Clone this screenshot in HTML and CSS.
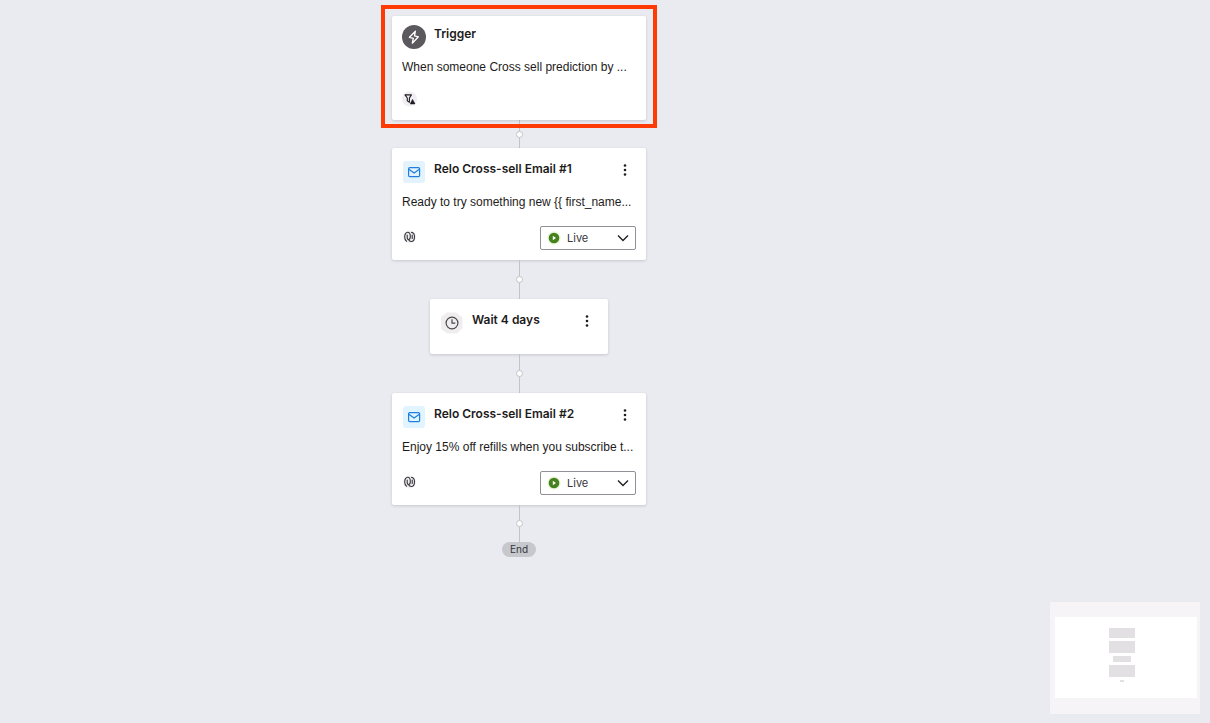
FILE: index.html
```
<!DOCTYPE html>
<html lang="en">
<head>
    <meta charset="UTF-8">
    <meta name="viewport" content="width=device-width, initial-scale=1">
    <title>Flow</title>
    <link rel="stylesheet" href="styles.css">
</head>
<body>
<main class="flow">
    <div class="highlight">
        <section class="card card_trigger">
            <div class="card_head">
                <svg class="icon" viewBox="0 0 24 24" fill="none">
                    <circle cx="12" cy="12" r="12" fill="#5b595e"/>
                    <path d="M13.4 6.2 7.4 12.3l3.9 1-1 4.9 6.1-6.4-3.9-.9z" stroke="#fff" stroke-width="1.3" stroke-linejoin="round"/>
                </svg>
                <h3 class="title">Trigger</h3>
            </div>
            <p class="desc">When someone Cross sell prediction by ...</p>
            <div class="card_foot">
                <svg class="badge" viewBox="0 0 16 16" fill="none">
                    <circle cx="7.5" cy="8" r="7.5" fill="#f0eef2"/>
                    <path d="M3 3.9h6.4L7.4 7v4.3L5.3 9.9V7z" stroke="#1d1b20" stroke-width="1.1" stroke-linejoin="round"/>
                    <path d="M10.5 8.4 13 12.9H8.2z" fill="#1d1b20" stroke="#1d1b20" stroke-width=".6" stroke-linejoin="round"/>
                </svg>
            </div>
        </section>
    </div>

    <div class="line line_short"><span class="dot"></span></div>

    <section class="card">
        <div class="card_head">
            <svg class="icon" viewBox="0 0 24 24" fill="none">
                <rect x="1" y="1" width="22" height="22" rx="3" fill="#e3f3fe"/>
                <rect x="6.6" y="7.6" width="11" height="9" rx="1.2" stroke="#1f7fe0" stroke-width="1.2"/>
                <path d="M6.8 9.2 12.1 13l5.3-3.8" stroke="#1f7fe0" stroke-width="1.2"/>
            </svg>
            <h3 class="title">Relo Cross-sell Email #1</h3>
            <button class="more" type="button" aria-label="More">
                <svg viewBox="0 0 4 14"><circle cx="2" cy="2.5" r="1.3"/><circle cx="2" cy="7" r="1.3"/><circle cx="2" cy="11.5" r="1.3"/></svg>
            </button>
        </div>
        <p class="desc">Ready to try something new {{ first_name...</p>
        <div class="card_foot">
            <svg class="badge" viewBox="0 0 16 16" fill="none">
                <circle cx="7.5" cy="7" r="6.5" fill="#f1f0f2"/>
                <path d="M4.6 11.2C3.3 10.4 2.7 8.900 2.7 6.900c0-2.500 1.200-4.600 3-4.600s2.600 1.700 2.600 4-.6 3.300-1.600 3.300-1.500-.9-1.500-2.100V5M9.500 2.400c2 .2 3 2 3 4.400 0 2.600-1.200 4.700-3.200 4.700-1.300 0-2.300-.7-2.700-1.800M10.200 5v3.500" stroke="#37353a" stroke-width="1.1" stroke-linecap="round"/>
            </svg>
            <div class="status">
                <select class="status_select" aria-label="Email #1 status">
                    <option>Live</option>
                    <option>Manual</option>
                    <option>Draft</option>
                </select>
                <svg class="status_play" viewBox="0 0 14 14"><circle cx="7" cy="7" r="6.7" fill="#e9f7d8"/><circle cx="7" cy="7" r="5.3" fill="#47801f"/><path d="M5.8 4.7v4.6L9 7z" fill="#fff"/></svg>
                <svg class="status_arrow" viewBox="0 0 12 8" fill="none"><path d="M1 1.5 6 6.5l5-5" stroke="#222024" stroke-width="1.4"/></svg>
            </div>
        </div>
    </section>

    <div class="line"><span class="dot"></span></div>

    <section class="card card_wait">
        <div class="card_head">
            <svg class="icon" viewBox="0 0 24 24" fill="none">
                <path d="M7 1.5h9l6.5 5V17L17 22.5H7.5L1 18V6z" fill="#f0edef"/>
                <circle cx="12" cy="12" r="5.9" stroke="#4a474c" stroke-width="1.2"/>
                <path d="M12 8.2v4h3.3" stroke="#4a474c" stroke-width="1.2"/>
            </svg>
            <h3 class="title">Wait 4 days</h3>
            <button class="more" type="button" aria-label="More">
                <svg viewBox="0 0 4 14"><circle cx="2" cy="2.5" r="1.3"/><circle cx="2" cy="7" r="1.3"/><circle cx="2" cy="11.5" r="1.3"/></svg>
            </button>
        </div>
    </section>

    <div class="line"><span class="dot"></span></div>

    <section class="card">
        <div class="card_head">
            <svg class="icon" viewBox="0 0 24 24" fill="none">
                <rect x="1" y="1" width="22" height="22" rx="3" fill="#e0f5ff"/>
                <rect x="6.6" y="7.6" width="11" height="9" rx="1.2" stroke="#1f7fe0" stroke-width="1.2"/>
                <path d="M6.8 9.2 12.1 13l5.3-3.8" stroke="#1f7fe0" stroke-width="1.2"/>
            </svg>
            <h3 class="title">Relo Cross-sell Email #2</h3>
            <button class="more" type="button" aria-label="More">
                <svg viewBox="0 0 4 14"><circle cx="2" cy="2.5" r="1.3"/><circle cx="2" cy="7" r="1.3"/><circle cx="2" cy="11.5" r="1.3"/></svg>
            </button>
        </div>
        <p class="desc">Enjoy 15% off refills when you subscribe t...</p>
        <div class="card_foot">
            <svg class="badge" viewBox="0 0 16 16" fill="none">
                <circle cx="7.5" cy="7" r="6.5" fill="#f1f0f2"/>
                <path d="M4.6 11.2C3.3 10.4 2.7 8.900 2.7 6.900c0-2.500 1.200-4.600 3-4.600s2.600 1.700 2.600 4-.6 3.300-1.600 3.300-1.500-.9-1.500-2.100V5M9.500 2.400c2 .2 3 2 3 4.400 0 2.600-1.200 4.700-3.200 4.700-1.300 0-2.300-.7-2.700-1.800M10.200 5v3.500" stroke="#37353a" stroke-width="1.1" stroke-linecap="round"/>
            </svg>
            <div class="status">
                <select class="status_select" aria-label="Email #2 status">
                    <option>Live</option>
                    <option>Manual</option>
                    <option>Draft</option>
                </select>
                <svg class="status_play" viewBox="0 0 14 14"><circle cx="7" cy="7" r="6.7" fill="#e9f7d8"/><circle cx="7" cy="7" r="5.3" fill="#47801f"/><path d="M5.8 4.7v4.6L9 7z" fill="#fff"/></svg>
                <svg class="status_arrow" viewBox="0 0 12 8" fill="none"><path d="M1 1.5 6 6.5l5-5" stroke="#222024" stroke-width="1.4"/></svg>
            </div>
        </div>
    </section>

    <div class="line line_end"><span class="dot"></span></div>
    <div class="end">End</div>
</main>

<!-- overview of the flow -->
<div class="minimap">
    <div class="minimap_view">
        <span class="mini mini_trigger"></span>
        <span class="mini"></span>
        <span class="mini mini_wait"></span>
        <span class="mini"></span>
        <span class="mini mini_end"></span>
    </div>
</div>
</body>
</html>
```
FILE: styles.css
```
* {
    margin: 0;
    padding: 0;
    box-sizing: border-box;
}

body {
    min-height: 100vh;
    background-color: #eaebf0;
    color: #1d1b20;
    font-family: Inter, "Liberation Sans", sans-serif;
    font-size: 12px;
    line-height: 18px;
}

.flow {
    display: flex;
    flex-direction: column;
    align-items: center;
    padding: 5px 172px 24px 0;
}

/* stays above the connector that starts under the trigger card */
.highlight {
    position: relative;
    z-index: 1;
    padding: 7px 7px 4px;
    border: 4px solid #ff3b05;
}

.card {
    width: 254px;
    padding: 12px 10px 10px;
    background-color: #fff;
    border-radius: 2px;
    box-shadow: 0 1px 3px rgba(40, 40, 60, 0.18);
}

.card_trigger {
    padding: 9px 10px 13px;
}

.card_wait {
    width: 178px;
    padding-bottom: 19px;
}

.card_head {
    display: flex;
    align-items: flex-start;
    gap: 8px;
    height: 24px;
}

.icon {
    flex: none;
    width: 24px;
    height: 24px;
}

.title {
    flex: 1;
    font-size: 12px;
    font-weight: 600;
    white-space: nowrap;
}

.more {
    display: flex;
    align-items: center;
    justify-content: center;
    width: 22px;
    height: 20px;
    border: none;
    background: none;
    cursor: pointer;
}

.more svg {
    width: 4px;
    height: 14px;
    fill: #1d1b20;
}

.desc {
    margin-top: 9px;
    font-family: "Liberation Sans", sans-serif;
    white-space: nowrap;
}

.card_foot {
    display: flex;
    align-items: center;
    justify-content: space-between;
    margin-top: 15px;
}

.badge {
    width: 16px;
    height: 16px;
}

.status {
    position: relative;
    width: 96px;
    height: 24px;
}

.status_select {
    width: 100%;
    height: 100%;
    padding: 0 24px 0 26px;
    appearance: none;
    border: 1px solid #929096;
    border-radius: 2px;
    background-color: #fff;
    color: #37353a;
    font-family: inherit;
    font-size: 11px;
}

.status_play,
.status_arrow {
    position: absolute;
    pointer-events: none;
}

.status_play {
    top: 5px;
    left: 7px;
    width: 14px;
    height: 14px;
}

.status_arrow {
    top: 8px;
    right: 7px;
    width: 12px;
    height: 8px;
}

/* connectors */
.line {
    display: flex;
    align-items: center;
    justify-content: center;
    width: 7px;
    height: 39px;
    background: linear-gradient(#c3c3c8, #c3c3c8) center / 1px 100% no-repeat;
}

.line_short {
    height: 28px;
    margin-top: -8px;
}

.line_end {
    height: 37px;
}

.dot {
    width: 7px;
    height: 7px;
    border: 1px solid #c3c3c8;
    border-radius: 50%;
    background-color: #fff;
}

.end {
    padding: 0 8px;
    border-radius: 8px;
    background-color: #c6c8ce;
    color: #37353a;
    font-size: 10px;
    line-height: 15px;
}

.minimap {
    position: fixed;
    right: 10px;
    bottom: 9px;
    width: 150px;
    padding: 15px 3px 16px 5px;
    background-color: #f6f4f7;
}

.minimap_view {
    display: flex;
    flex-direction: column;
    align-items: center;
    gap: 3px;
    padding: 11px 8px 16px 0;
    background-color: #fff;
}

.mini {
    width: 26px;
    height: 12px;
    background-color: #e2e0e3;
}

.mini_trigger {
    height: 10px;
}

.mini_wait {
    width: 18px;
    height: 6px;
}

.mini_end {
    width: 4px;
    height: 2px;
}
```
